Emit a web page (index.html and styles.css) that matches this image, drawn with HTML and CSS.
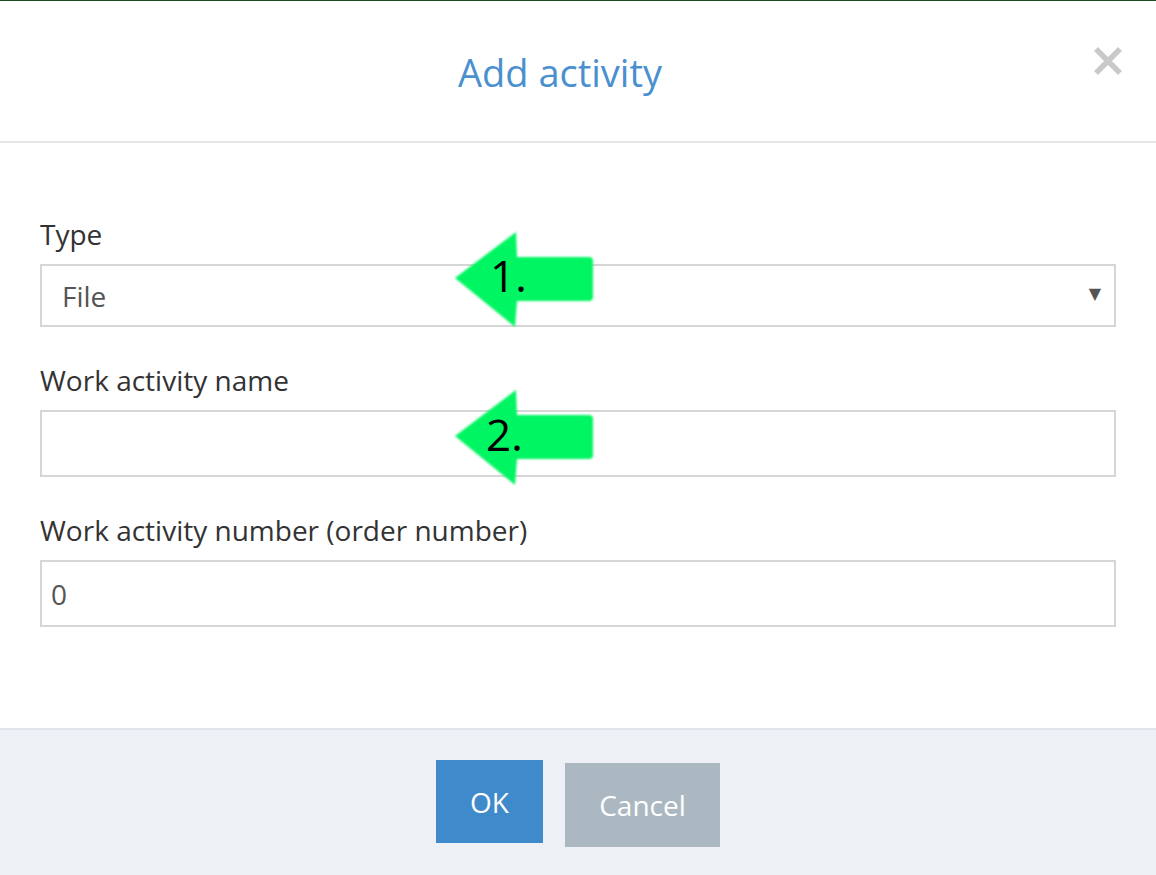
FILE: index.html
```html
<!DOCTYPE html>
<html lang="en">
<head>
  <meta charset="UTF-8" />
  <title>Add activity</title>
  <link rel="stylesheet" href="styles.css">
</head>
<body>

  <div class="modal">
    <header class="modal-header">
      <h3 class="modal-title">Add activity</h3>
      <span class="close-btn">
        <svg width="30" height="30" viewBox="0 0 30 30">
          <path d="M3 3 L27 27 M27 3 L3 27" stroke="#c9c9c9" stroke-width="5.5" />
        </svg>
      </span>
    </header>

    <div class="modal-body">
      <div class="form-group">
        <label>Type</label>
        <div class="select-wrap">
          <select class="field select">
            <option>File</option>
          </select>
          <span class="caret">▼</span>
        </div>
      </div>
      <div class="form-group">
        <label>Work activity name</label>
        <input class="field" type="text" value="">
      </div>
      <div class="form-group">
        <label>Work activity number (order number)</label>
        <input class="field number" type="text" value="0">
      </div>

      <svg class="hint hint-1" width="150" height="105" viewBox="0 0 150 105">
        <defs>
          <filter id="soft"><feGaussianBlur stdDeviation="0.8" /></filter>
        </defs>
        <path d="M5 50 L66 4 L67 29 L139 29 Q143 29 143 33 L143 69 Q143 73 139 73 L67 73 L65 99 Z" fill="#00f562" filter="url(#soft)" />
        <text x="40" y="64" class="hint-num">1.</text>
      </svg>

      <svg class="hint hint-2" width="150" height="105" viewBox="0 0 150 105">
        <path d="M5 50 L66 4 L67 29 L139 29 Q143 29 143 33 L143 69 Q143 73 139 73 L67 73 L65 99 Z" fill="#00f562" filter="url(#soft)" />
        <text x="36" y="65" class="hint-num">2.</text>
      </svg>
    </div>

    <footer class="modal-footer">
      <div class="btn btn-ok">OK</div>
      <div class="btn btn-cancel">Cancel</div>
    </footer>
  </div>

</body>
</html>
```

FILE: styles.css
```css
* { box-sizing: border-box; margin: 0; padding: 0; }
html, body {
  height: 100%;
  background: #fff;
  font-family: "Open Sans", "Noto Sans", sans-serif;
  color: #333;
}
body {
  border-top: 1px solid #1b4a1e;
  overflow: hidden;
}
.modal {
  min-height: 100%;
  display: flex;
  flex-direction: column;
}
.modal-header {
  position: relative;
  height: 142px;
  border-bottom: 2px solid #e6e6e6;
  display: flex;
  align-items: center;
  justify-content: center;
}
.modal-title {
  font-size: 38px;
  font-weight: 400;
  color: #4a90cf;
  margin: 2px 36px 0 0;
}
.close-btn {
  position: absolute;
  right: 33px;
  top: 45px;
  width: 30px;
  height: 30px;
}
.modal-body {
  position: relative;
  padding: 76px 40px 101px;
}
.form-group { margin-bottom: 38px; }
.form-group:last-of-type { margin-bottom: 0; }
.form-group label {
  display: block;
  font-size: 28px;
  line-height: 30px;
  margin-bottom: 15px;
  color: #333;
}
.field {
  display: block;
  width: 100%;
  height: 67px;
  border: 2px solid #d6d6d6;
  border-radius: 0;
  background: #fff;
  font-family: inherit;
  font-size: 28px;
  color: #555;
  padding: 0 20px;
  outline: none;
}
.select-wrap { position: relative; }
.select {
  height: 63px;
  appearance: none;
  -webkit-appearance: none;
}
.caret {
  position: absolute;
  right: 15px;
  top: 20px;
  font-size: 16px;
  color: #555;
  font-family: "DejaVu Sans", sans-serif;
}
.number { padding-left: 9px; }
.hint {
  position: absolute;
  left: 450px;
}
.hint-1 { top: 85px; }
.hint-2 { top: 243px; }
.hint-num {
  font-family: "Open Sans", sans-serif;
  font-size: 44px;
  fill: #000;
}
.modal-footer {
  flex: 1;
  background: #edf1f6;
  border-top: 2px solid #dfe5ea;
  display: flex;
  justify-content: center;
  align-items: flex-start;
  gap: 22px;
  padding-top: 30px;
}
.btn {
  color: #fff;
  font-size: 28px;
  display: flex;
  align-items: center;
  justify-content: center;
}
.btn-ok {
  width: 107px;
  height: 83px;
  background: #3f8acb;
}
.btn-cancel {
  width: 155px;
  height: 84px;
  margin-top: 3px;
  background: #abb8c2;
}
```
